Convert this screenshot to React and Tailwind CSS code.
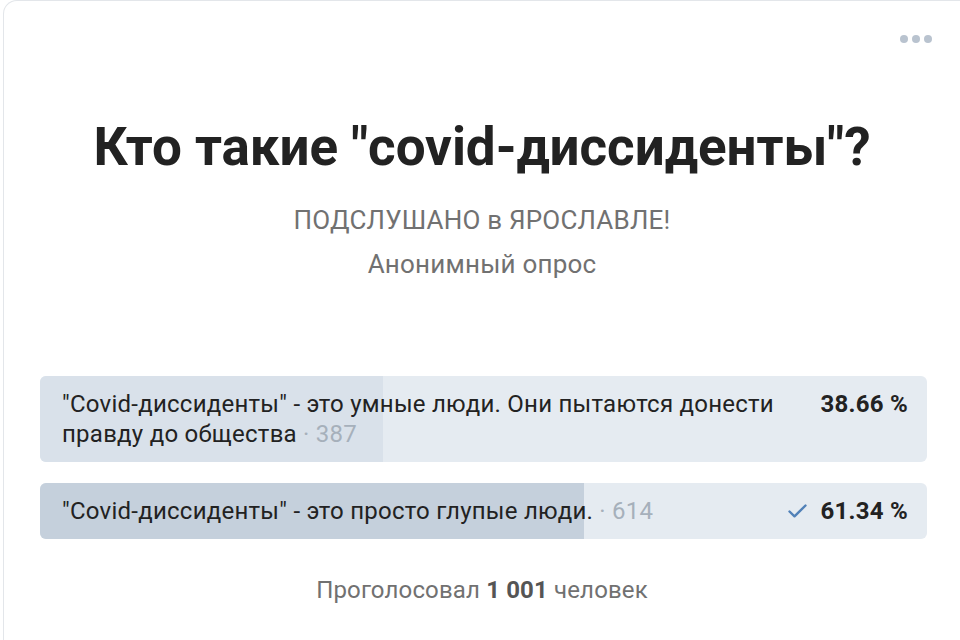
import React from "react";

const options = [
  {
    text: '"Covid-диссиденты" - это умные люди. Они пытаются донести правду до общества',
    votes: 387,
    percent: 38.66,
    fill: "bg-[#d9e1ea]",
    voted: false,
  },
  {
    text: '"Covid-диссиденты" - это просто глупые люди.',
    votes: 614,
    percent: 61.34,
    fill: "bg-[#c5d0dc]",
    voted: true,
  },
];

function Check() {
  return (
    <svg width="21" height="20" viewBox="0 0 21 20" fill="none">
      <path
        d="M2.5 10.5l5 4.8L18.5 4.5"
        stroke="#5181b8"
        strokeWidth="2.4"
        strokeLinecap="round"
        strokeLinejoin="round"
      />
    </svg>
  );
}

export default function App() {
  return (
    <div className="min-h-screen bg-white font-['Roboto',sans-serif] overflow-hidden">
      <div className="ml-[3px] h-[660px] border-l border-t border-[#e3e6ea] rounded-tl-[14px] bg-white flex flex-col">
        {/* menu */}
        <div className="flex justify-end pr-[28px] pt-[34px] h-[40px]">
          <div className="flex gap-[4px]">
            <span className="w-[8px] h-[8px] rounded-full bg-[#b9c3cf]" />
            <span className="w-[8px] h-[8px] rounded-full bg-[#b9c3cf]" />
            <span className="w-[8px] h-[8px] rounded-full bg-[#b9c3cf]" />
          </div>
        </div>

        {/* header */}
        <div className="flex flex-col items-center mt-[76px]">
          <h1 className="text-[53px] leading-[60px] font-bold text-[#222222] tracking-[-0.05px]">
            Кто такие "covid-диссиденты"?
          </h1>
          <div className="mt-[27px] text-[26px] leading-[32px] tracking-[0.2px] text-[#717171]">
            ПОДСЛУШАНО в ЯРОСЛАВЛЕ!
          </div>
          <div className="mt-[12px] text-[26px] leading-[32px] tracking-[0.2px] text-[#717171]">
            Анонимный опрос
          </div>
        </div>

        {/* answers */}
        <div className="mt-[96px] ml-[36px] mr-[33px] flex flex-col gap-[21px]">
          {options.map((o) => (
            <div
              key={o.votes}
              className="relative rounded-[6px] bg-[#e5ebf1] overflow-hidden"
            >
              <div
                className={`absolute left-0 top-0 bottom-0 ${o.fill}`}
                style={{ width: `${o.percent}%` }}
              />
              <div className="relative flex items-start gap-6 pl-[22px] pr-[19px] py-[13px] text-[24px] leading-[30px] tracking-[0.25px]">
                <div className="flex-1 text-[#222222]">
                  {o.text} <span className="text-[#a6b0bb]">· {o.votes}</span>
                </div>
                <div className="flex items-center gap-[12px] font-bold text-[#222222] whitespace-nowrap">
                  {o.voted && <Check />}
                  <span>{o.percent.toFixed(2)} %</span>
                </div>
              </div>
            </div>
          ))}
        </div>

        {/* total */}
        <div className="mt-[36px] text-center text-[24px] leading-[30px] tracking-[0.15px] text-[#717171]">
          Проголосовал <span className="font-bold text-[#555555]">1 001</span> человек
        </div>
      </div>
    </div>
  );
}
